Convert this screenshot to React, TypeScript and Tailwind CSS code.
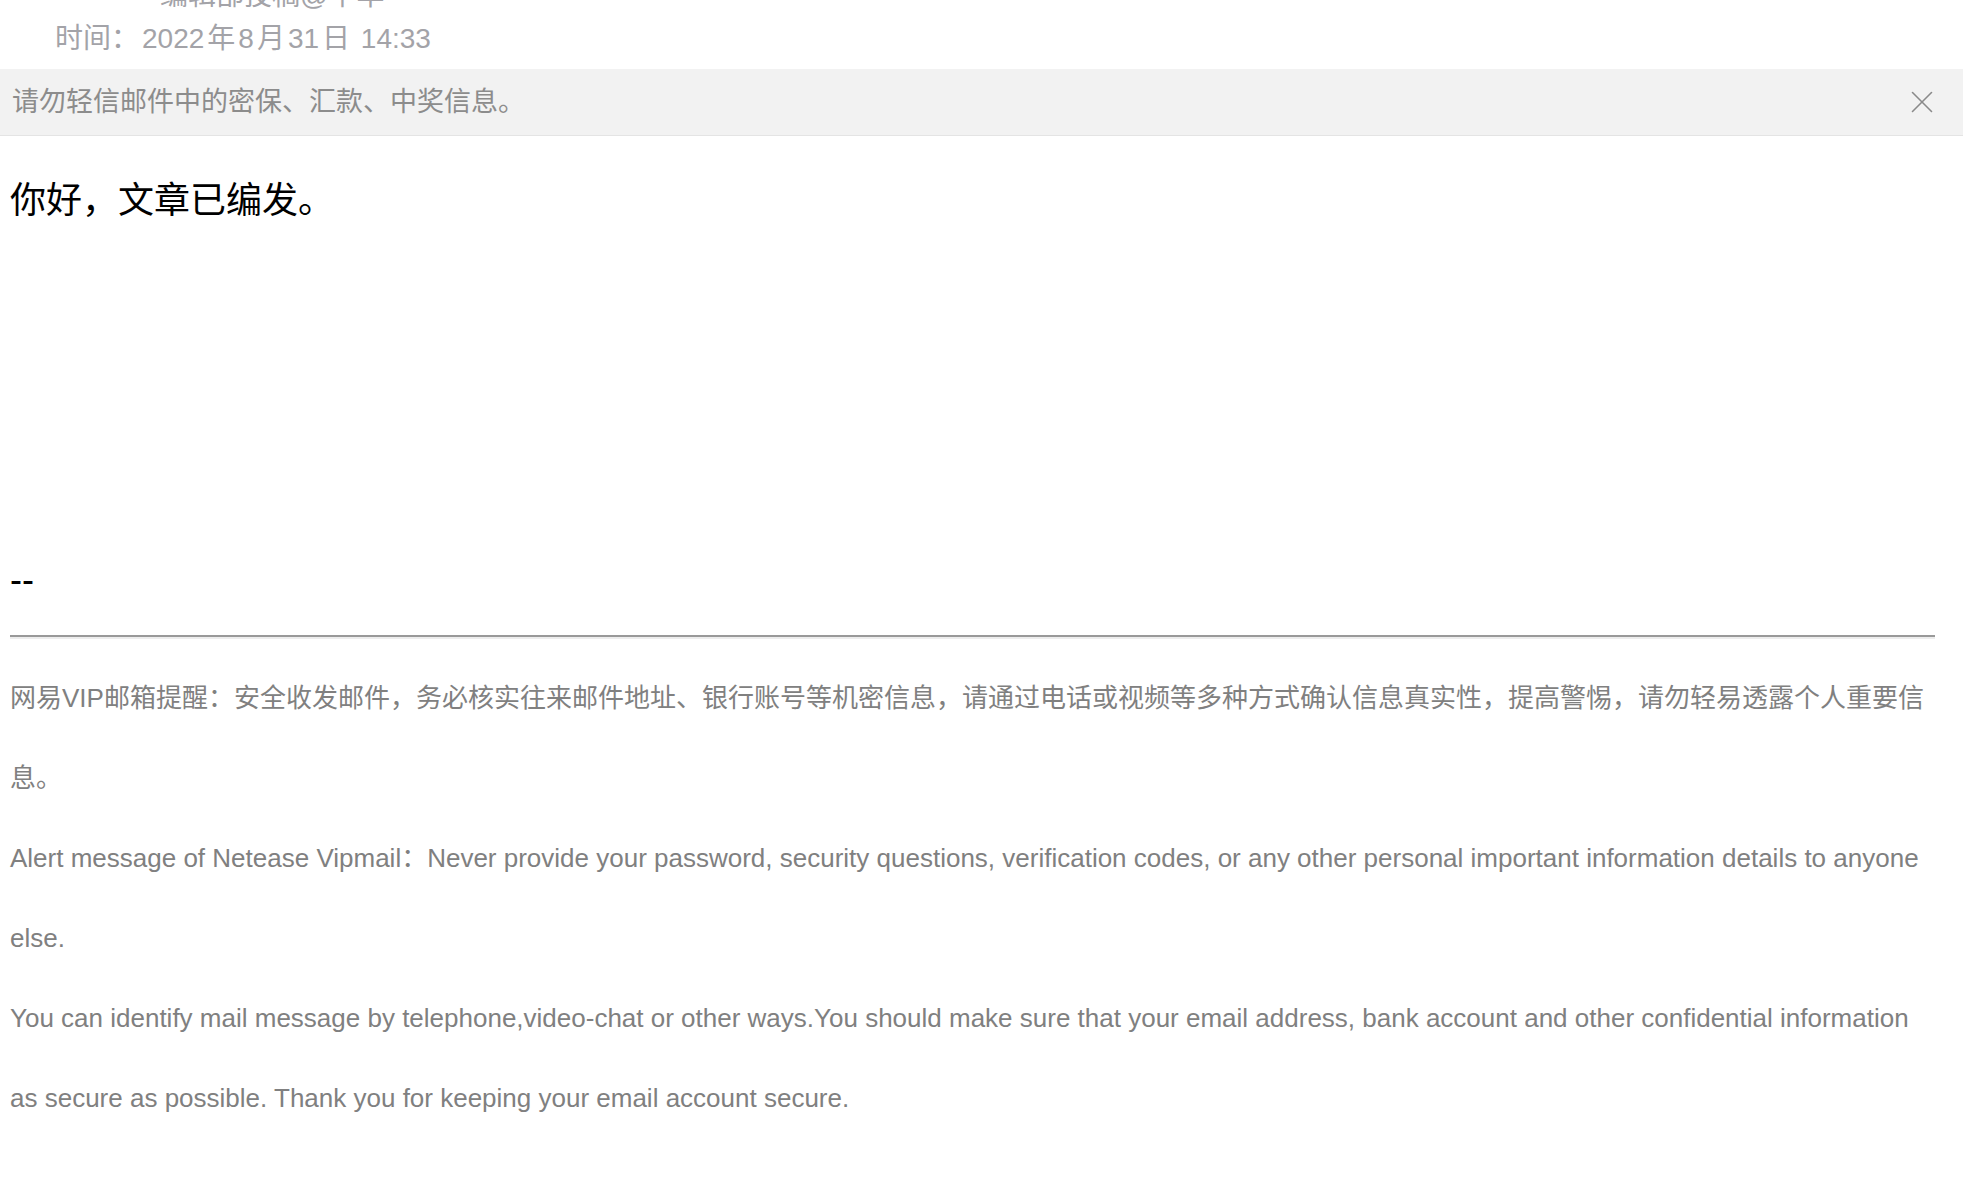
const FONT = "font-['Liberation_Sans','Noto_Sans_CJK_SC',sans-serif]";

function CloseIcon() {
  return (
    <svg width="22" height="22" viewBox="0 0 22 22" fill="none" stroke="#8a8a8a" strokeWidth="1.6" strokeLinecap="round">
      <path d="M1.5 1.5 20.5 20.5" />
      <path d="M20.5 1.5 1.5 20.5" />
    </svg>
  );
}

export default function App() {
  return (
    <div className={`w-full min-h-screen bg-white ${FONT}`}>
      {/* header: sender line scrolled out of view, then date */}
      <div className="pl-[55px] text-[28px] text-[#a3a3a8]">
        <div className="h-[10px] overflow-hidden flex items-end pl-[105px]">
          <span className="leading-[28px] whitespace-nowrap">编辑部投稿@中华</span>
        </div>
        <div className="pt-[15px] pb-[16px] leading-[28px]">
          时间：<span className="ml-[3px]">2022</span>
          <span className="mx-[3px]">年</span>8<span className="mx-[3px]">月</span>31<span className="mx-[3px]">日</span> 14:33
        </div>
      </div>

      {/* warning banner */}
      <div className="h-[67px] bg-[#f2f2f2] border-b border-[#e4e4e4] flex items-center justify-between pl-[12px] pr-[30px]">
        <span className="text-[27px] text-[#8c8c8c]">请勿轻信邮件中的密保、汇款、中奖信息。</span>
        <CloseIcon />
      </div>

      {/* mail body */}
      <div className="pl-[10px] pr-[28px]">
        <p className="mt-[41px] text-[36px] leading-[48px] text-black">你好，文章已编发。</p>

        <p className="mt-[331px] text-[36px] leading-[48px] text-black">--</p>

        <hr className="mt-[31px] h-0 border-t-2 border-t-[#999999] border-b-2 border-b-[#ededed]" />

        <div className="mt-[19px] text-[26px] text-[#808080] leading-[80px]">
          <p>
            网易VIP邮箱提醒：安全收发邮件，务必核实往来邮件地址、银行账号等机密信息，请通过电话或视频等多种方式确认信息真实性，提高警惕，请勿轻易透露个人重要信息。
          </p>
          <p>
            Alert message of Netease Vipmail：Never provide your password, security questions, verification codes, or any other personal important information details to anyone else.
          </p>
          <p>
            You can identify mail message by telephone,video-chat or other ways.You should make sure that your email address, bank account and other confidential information as secure as possible. Thank you for keeping your email account secure.
          </p>
        </div>
      </div>
    </div>
  );
}
